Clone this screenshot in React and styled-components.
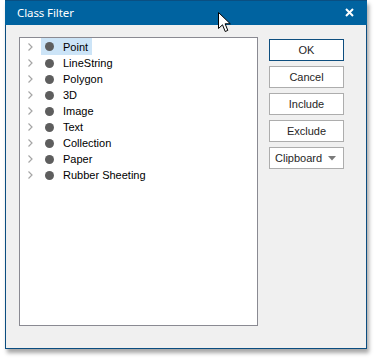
import React from 'react';
import styled, { createGlobalStyle } from 'styled-components';

const GlobalStyle = createGlobalStyle`
  html, body {
    margin: 0;
    padding: 0;
    background: #ffffff;
  }
  body {
    width: 374px;
    height: 360px;
    overflow: hidden;
    font-family: "Liberation Sans", Arial, sans-serif;
  }
`;

const Page = styled.div`
  position: relative;
  padding-left: 5px;
  width: 374px;
  height: 360px;
  box-sizing: border-box;
`;

const Dialog = styled.div`
  width: 362px;
  height: 349px;
  box-sizing: border-box;
  border: 1px solid #0b4d80;
  border-top: none;
  background: #f0f0f0;
  display: flex;
  flex-direction: column;
  box-shadow: 2px 4px 4px rgba(0, 0, 0, 0.35);
`;

const TitleBar = styled.div`
  height: 25px;
  flex: none;
  margin: 0 -1px;
  background: #0063a0;
  border-top: 1px solid #0a4f82;
  box-sizing: border-box;
  display: flex;
  align-items: center;
  justify-content: space-between;
  padding: 0 13px 2px 12px;
`;

const Title = styled.span`
  color: #ffffff;
  font-family: "Noto Sans", "Open Sans", sans-serif;
  font-size: 11.5px;
  letter-spacing: -0.1px;
`;

const Body = styled.div`
  flex: 1;
  display: flex;
  gap: 11px;
  padding: 12px 22px 22px 13px;
  min-height: 0;
`;

const TreeBox = styled.div`
  width: 240px;
  box-sizing: border-box;
  background: #ffffff;
  border: 1px solid #8a8a92;
`;

const Row = styled.div`
  height: ${p => (p.first ? '17px' : '16px')};
  display: flex;
  align-items: center;
  padding-left: 8px;
  font-size: 11px;
  color: #000000;
`;

const Chevron = styled.svg`
  width: 5px;
  height: 8px;
  flex: none;
  margin-right: 8px;
`;

const Label = styled.div`
  display: flex;
  align-items: center;
  height: ${p => (p.selected ? '17px' : '16px')};
  padding: 0 4px 0 4px;
  background: ${p => (p.selected ? '#cce4f7' : 'transparent')};
`;

const Dot = styled.span`
  width: 9px;
  height: 9px;
  border-radius: 50%;
  background: #5e5e5e;
  margin-right: 9px;
  flex: none;
`;

const Buttons = styled.div`
  display: flex;
  flex-direction: column;
  gap: 5px;
  padding-top: 2px;
`;

const Button = styled.div`
  width: 75px;
  height: 22px;
  box-sizing: border-box;
  background: #ffffff;
  border: 1px solid ${p => (p.primary ? '#0e4e7f' : '#adadad')};
  display: flex;
  align-items: center;
  justify-content: ${p => (p.dropdown ? 'space-between' : 'center')};
  padding: ${p => (p.dropdown ? '0 7px 0 5px' : '0')};
  font-size: 11px;
  color: #262626;
`;

const Cursor = styled.svg`
  position: absolute;
  left: 218px;
  top: 12px;
`;

const items = ['Point', 'LineString', 'Polygon', '3D', 'Image', 'Text', 'Collection', 'Paper', 'Rubber Sheeting'];

export default function App() {
  return (
    <Page>
      <GlobalStyle />
      <Dialog>
        <TitleBar>
          <Title>Class Filter</Title>
          <svg width="9" height="9" viewBox="0 0 9 9">
            <path d="M1 1 L8 8 M8 1 L1 8" stroke="#ffffff" strokeWidth="2" />
          </svg>
        </TitleBar>
        <Body>
          <TreeBox>
            {items.map((name, i) => (
              <Row key={name} first={i === 0}>
                <Chevron viewBox="0 0 5 8">
                  <path d="M0.5 0.5 L4 4 L0.5 7.5" stroke="#a6a6a6" strokeWidth="1.2" fill="none" />
                </Chevron>
                <Label selected={i === 0}>
                  <Dot />
                  {name}
                </Label>
              </Row>
            ))}
          </TreeBox>
          <Buttons>
            <Button primary>OK</Button>
            <Button>Cancel</Button>
            <Button>Include</Button>
            <Button>Exclude</Button>
            <Button dropdown>
              Clipboard
              <svg width="8" height="5" viewBox="0 0 8 5">
                <path d="M0 0 L8 0 L4 4.5 Z" fill="#7a7a7a" />
              </svg>
            </Button>
          </Buttons>
        </Body>
      </Dialog>
      <Cursor width="14" height="22" viewBox="0 0 14 22">
        <path d="M0.5 0.5 L0.5 16.5 L4.5 12.8 L7.2 19.5 L9.8 18.4 L7.1 11.8 L12.3 11.8 Z" fill="#ffffff" stroke="#000000" strokeWidth="1" strokeLinejoin="miter" />
      </Cursor>
    </Page>
  );
}
